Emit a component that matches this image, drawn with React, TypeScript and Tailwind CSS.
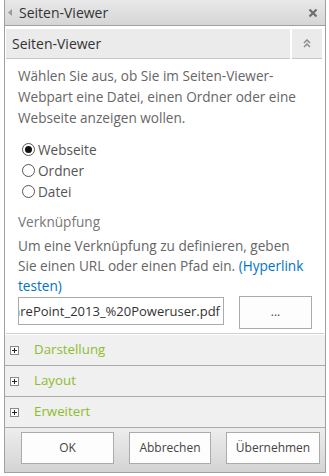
import React from "react";

const font = { fontFamily: '"Open Sans", "Noto Sans", sans-serif' };

function Radio({ checked, label }: { checked?: boolean; label: string }) {
  return (
    <div className="flex items-center h-[21px] pl-[4px]">
      <span className="w-[13px] h-[13px] rounded-full border border-[#555] flex items-center justify-center bg-white">
        {checked && <span className="w-[7px] h-[7px] rounded-full bg-[#111]" />}
      </span>
      <span className="ml-[3px] text-[#555]">{label}</span>
    </div>
  );
}

function Section({ label }: { label: string }) {
  return (
    <div className="h-[31px] flex items-center border-b border-[#ababab] bg-[#f0f0f0]">
      <span className="ml-[5px] w-[9px] h-[9px] border border-[#8a8a8a] bg-white flex items-center justify-center">
        <svg width="7" height="7" viewBox="0 0 7 7">
          <rect x="1" y="3" width="5" height="1" fill="#222" />
          <rect x="3" y="1" width="1" height="5" fill="#222" />
        </svg>
      </span>
      <span className="ml-[15px] text-[13.3px] text-[#8fbc2f]">{label}</span>
    </div>
  );
}

function Btn({ label, w }: { label: string; w: string }) {
  return (
    <div className={`${w} h-[32px] border border-[#ababab] bg-[#fdfdfd] flex items-center justify-center text-[12px] text-[#444]`}>
      {label}
    </div>
  );
}

export default function App() {
  return (
    <div className="w-[329px] h-[476px] bg-white overflow-hidden" style={font}>
      <div className="ml-[4px] w-[322px] h-[473px] border-l border-r border-b border-[#a0a0a0] flex flex-col">
        {/* Header */}
        <div className="h-[26px] shrink-0 border-b border-[#a0a0a0] bg-gradient-to-b from-[#e8e8e8] to-[#d6d6d6] flex items-center">
          <svg width="4" height="7" viewBox="0 0 4 7" className="ml-[3px]">
            <path d="M4 0 L0 3.5 L4 7 Z" fill="#9a9a9a" />
          </svg>
          <span className="ml-[7px] text-[14px] text-[#333]">Seiten-Viewer</span>
          <svg width="10" height="10" viewBox="0 0 10 10" className="ml-auto mr-[7px]">
            <path d="M1.5 1.5 L8.5 8.5 M8.5 1.5 L1.5 8.5" stroke="#6e6e6e" strokeWidth="2.2" />
          </svg>
        </div>
        {/* Section title */}
        <div className="mt-[3px] mx-[1px] flex h-[30px] shrink-0">
          <div className="flex-1 bg-[#ebebeb] border-b border-[#c8c8c8] flex items-center pl-[6px] text-[14px] text-[#333]">
            Seiten-Viewer
          </div>
          <div className="ml-[2px] w-[30px] bg-[#ebebeb] border-b border-[#c8c8c8] flex items-center justify-center">
            <svg width="8" height="9" viewBox="0 0 8 9">
              <path d="M1 4 L4 1 L7 4 M1 8 L4 5 L7 8" stroke="#8a8a8a" strokeWidth="1.5" fill="none" />
            </svg>
          </div>
          <div className="w-[2px]" />
        </div>
        {/* Body */}
        <div className="pl-[13px] pt-[6px] text-[13.6px] leading-[21px] text-[#666]">
          <div className="whitespace-nowrap">Wählen Sie aus, ob Sie im Seiten-Viewer-</div>
          <div className="whitespace-nowrap">Webpart eine Datei, einen Ordner oder eine</div>
          <div className="whitespace-nowrap">Webseite anzeigen wollen.</div>
          <div className="mt-[11px]">
            <Radio checked label="Webseite" />
            <Radio label="Ordner" />
            <Radio label="Datei" />
          </div>
          <div className="mt-[9px] text-[#777]">Verknüpfung</div>
          <div className="mt-[4px] leading-[20px]">
            <div className="whitespace-nowrap">Um eine Verknüpfung zu definieren, geben</div>
            <div className="whitespace-nowrap">
              Sie einen URL oder einen Pfad ein. <span className="text-[#0072c6]">(Hyperlink</span>
            </div>
            <div className="whitespace-nowrap text-[#0072c6]">testen)</div>
          </div>
          <div className="flex items-start">
            <div className="mt-[1px] w-[206px] h-[28px] border border-[#ababab] bg-white flex items-center justify-end overflow-hidden pr-[3px]">
              <span className="whitespace-nowrap text-[13px] text-[#333]">SharePoint_2013_%20Poweruser.pdf</span>
            </div>
            <div className="ml-[15px] w-[73px] h-[33px] border border-[#ababab] bg-[#fdfdfd] flex items-center justify-center text-[12px] text-[#444] leading-none pb-[2px]">
              ...
            </div>
          </div>
        </div>
        <div className="mt-[4px] mx-[1px] border-b border-[#cfcfcf] h-[1px]" />
        <div className="mt-[1px]">
          <Section label="Darstellung" />
          <Section label="Layout" />
          <Section label="Erweitert" />
        </div>
        <div className="flex-1 bg-gradient-to-b from-[#ededed] to-[#d4d4d4] flex items-start pt-[4px] pl-[16px]">
          <Btn label="OK" w="w-[93px]" />
          <div className="ml-[15px]"><Btn label="Abbrechen" w="w-[82px]" /></div>
          <div className="ml-[15px]"><Btn label="Übernehmen" w="w-[94px]" /></div>
        </div>
      </div>
    </div>
  );
}
